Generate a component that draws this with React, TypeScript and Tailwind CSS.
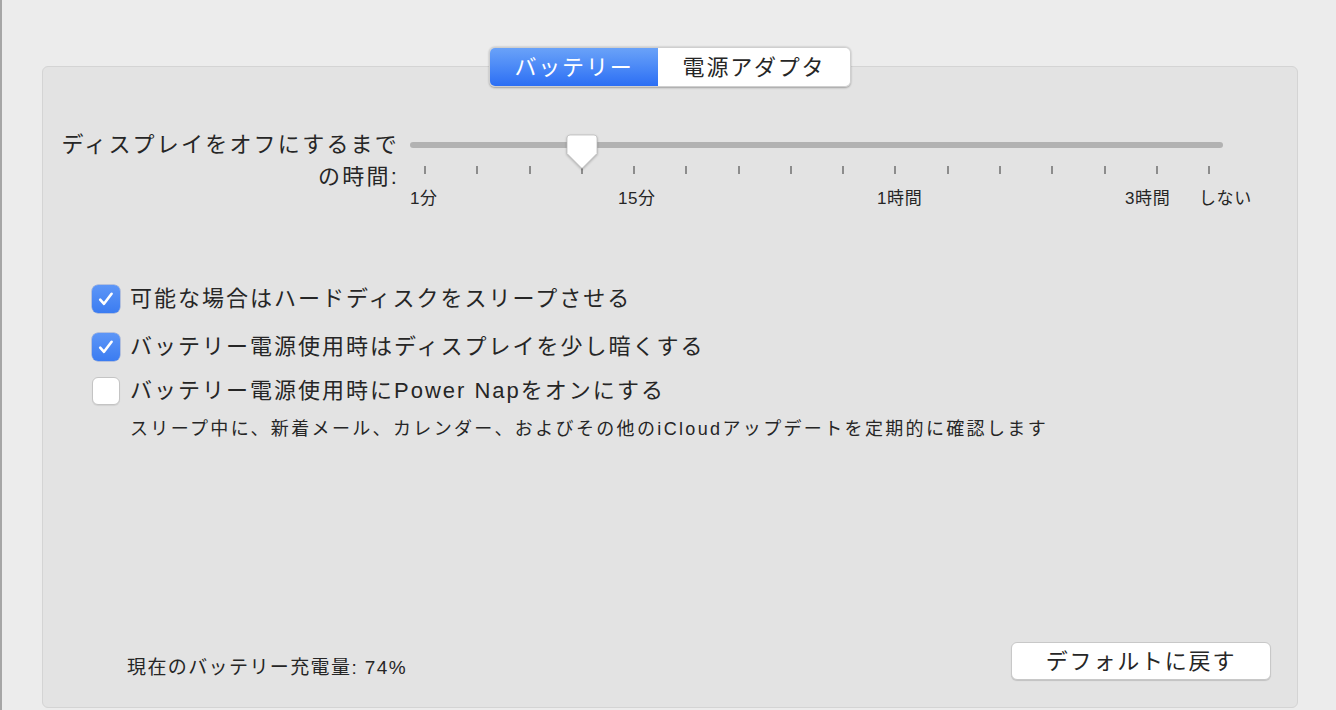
import React from 'react';

const font = "font-['Liberation_Sans','Noto_Sans_CJK_JP',sans-serif]";

const ticks = Array.from({ length: 16 }, (_, i) => 15 + i * 52.27);

const tickLabels = [
  { text: '1分', left: 0 },
  { text: '15分', left: 208 },
  { text: '1時間', left: 467 },
  { text: '3時間', left: 715 },
  { text: 'しない', left: 789 },
];

const Check = () => (
  <svg width="18" height="18" viewBox="0 0 18 18" fill="none">
    <path d="M3.2 9.6 L7 13.8 L14.6 3.8" stroke="white" strokeWidth="2.6" strokeLinecap="round" strokeLinejoin="round" />
  </svg>
);

const CheckRow = ({ checked, label, className }: { checked: boolean; label: string; className?: string }) => (
  <div className={`flex items-center gap-[10px] pl-[49px] ${className ?? ''}`}>
    {checked ? (
      <div className="w-[28px] h-[28px] rounded-[6px] bg-gradient-to-b from-[#5d96f7] to-[#3b7cf1] flex items-center justify-center shadow-[0_0_0_0.5px_rgba(40,90,200,0.5)]">
        <Check />
      </div>
    ) : (
      <div className="w-[28px] h-[28px] rounded-[6px] bg-white border border-[#c4c4c4] shadow-[0_1px_1px_rgba(0,0,0,0.08)]" />
    )}
    <span className="text-[22px] leading-[32px] tracking-[2px] text-[#262626]">{label}</span>
  </div>
);

export default function App() {
  return (
    <div className={`w-[1336px] h-[710px] overflow-hidden bg-[#ececec] border-l-2 border-[#a6a6a6] ${font}`}>
      <div className="ml-[40px] mt-[66px] w-[1256px] h-[642px] rounded-[6px] border border-[#d4d4d4] bg-[#e3e3e3] flex flex-col">
        {/* segmented control */}
        <div className="flex justify-center -mt-[20px]">
          <div className="flex h-[40px] rounded-[6px] overflow-hidden shadow-[0_0.5px_2px_rgba(0,0,0,0.3)] border border-[#cfcfcf]">
            <div className="w-[168px] bg-gradient-to-b from-[#6aa2f8] to-[#2c6ef4] text-white text-[22px] tracking-[1.8px] flex items-center justify-center">
              バッテリー
            </div>
            <div className="w-[192px] bg-white text-[#262626] text-[22px] tracking-[1.8px] flex items-center justify-center">
              電源アダプタ
            </div>
          </div>
        </div>

        {/* slider row */}
        <div className="flex mt-[42px]">
          <div className="w-[356px] text-right text-[22px] leading-[32px] tracking-[2.2px] text-[#262626]">
            <div>ディスプレイをオフにするまで</div>
            <div>の時間:</div>
          </div>
          <div className="relative ml-[11px] w-[813px] h-[90px]">
            <div className="absolute left-0 right-0 top-[13px] h-[6px] rounded-full bg-[#b2b2b2]" />
            {ticks.map((x, i) => (
              <div key={i} className="absolute top-[37px] w-[2px] h-[8px] bg-[#8c8c8c]" style={{ left: x - 1 }} />
            ))}
            <svg className="absolute left-[156px] top-[5px] drop-shadow-[0_1px_1px_rgba(0,0,0,0.25)]" width="32" height="36" viewBox="0 0 32 36">
              <path
                d="M4 1 H28 A3 3 0 0 1 31 4 V19.5 L16 34.5 L1 19.5 V4 A3 3 0 0 1 4 1 Z"
                fill="white"
                stroke="#bdbdbd"
                strokeWidth="0.8"
              />
            </svg>
            {tickLabels.map((l) => (
              <div key={l.text} className="absolute top-[58px] text-[17px] leading-[24px] tracking-[0.6px] text-[#262626] whitespace-nowrap" style={{ left: l.left }}>
                {l.text}
              </div>
            ))}
          </div>
        </div>

        {/* checkboxes */}
        <CheckRow className="mt-[64px]" checked label="可能な場合はハードディスクをスリープさせる" />
        <CheckRow className="mt-[16px]" checked label="バッテリー電源使用時はディスプレイを少し暗くする" />
        <CheckRow className="mt-[12px]" checked={false} label="バッテリー電源使用時にPower Napをオンにする" />
        <div className="pl-[87px] mt-[9px] text-[18px] leading-[26px] tracking-[2.35px] text-[#262626]">
          スリープ中に、新着メール、カレンダー、およびその他のiCloudアップデートを定期的に確認します
        </div>

        {/* footer */}
        <div className="mt-auto mb-[27px] flex items-end justify-between pl-[84px] pr-[26px]">
          <div className="text-[19px] leading-[26px] tracking-[1.4px] text-[#262626] mb-[-1px]">現在のバッテリー充電量: 74%</div>
          <button className="w-[260px] h-[38px] rounded-[6px] bg-white border border-[#c8c8c8] shadow-[0_1px_1px_rgba(0,0,0,0.15)] text-[22px] tracking-[1.8px] text-[#262626] flex items-center justify-center">
            デフォルトに戻す
          </button>
        </div>
      </div>
    </div>
  );
}
